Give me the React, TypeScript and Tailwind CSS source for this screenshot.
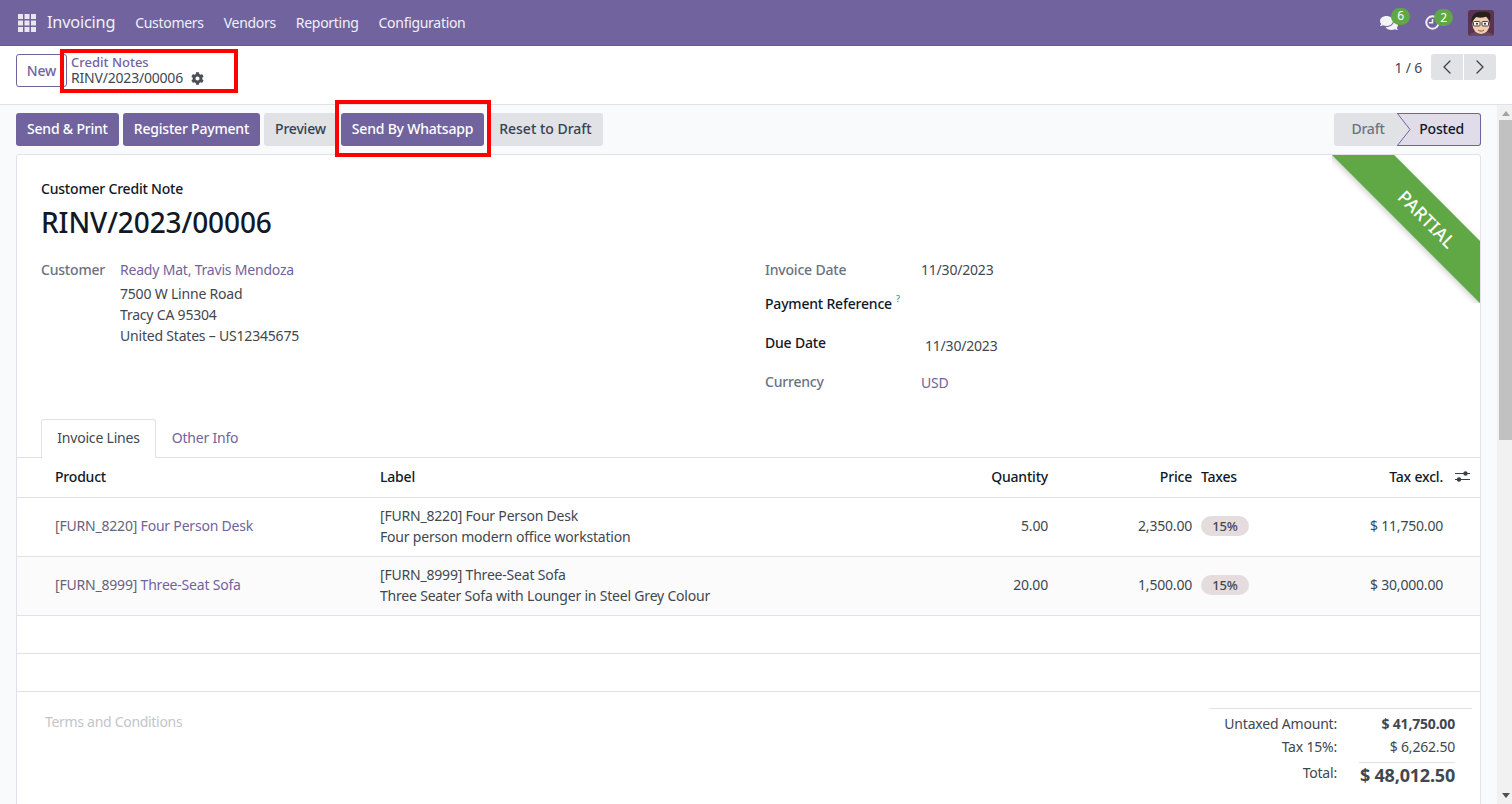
import { FaCog, FaComments } from 'react-icons/fa'
import { ChevronLeft, ChevronRight } from 'lucide-react'

const FONT = '[font-family:"Noto_Sans","Open_Sans",sans-serif]'

const LINES = [
  {
    code: '[FURN_8220]',
    name: 'Four Person Desk',
    label: '[FURN_8220] Four Person Desk',
    desc: 'Four person modern office workstation',
    qty: '5.00',
    price: '2,350.00',
    total: '$ 11,750.00',
    rowBg: 'bg-white',
  },
  {
    code: '[FURN_8999]',
    name: 'Three-Seat Sofa',
    label: '[FURN_8999] Three-Seat Sofa',
    desc: 'Three Seater Sofa with Lounger in Steel Grey Colour',
    qty: '20.00',
    price: '1,500.00',
    total: '$ 30,000.00',
    rowBg: 'bg-[#fbfbfb]',
  },
]

function AppsIcon() {
  return (
    <svg width="18" height="18" viewBox="0 0 18 18" fill="#e8e6f0">
      {[0, 6.5, 13].map((y) =>
        [0, 6.5, 13].map((x) => <rect key={`${x}-${y}`} x={x} y={y} width="5" height="5" />),
      )}
    </svg>
  )
}

function ClockIcon() {
  return (
    <svg width="15" height="15" viewBox="0 0 15 15" fill="none" stroke="#f0eff5">
      <circle cx="7.5" cy="7.5" r="6.2" strokeWidth="2" />
      <path d="M7.5 4v3.8H4" strokeWidth="1.5" />
    </svg>
  )
}

function Avatar() {
  return (
    <svg width="26" height="26" viewBox="0 0 26 26" className="rounded-[3px]">
      <rect width="26" height="26" fill="#5b3350" />
      <path d="M1 26c1-3 5-4 7-4h10c2 0 6 1 7 4z" fill="#6b4a60" />
      <ellipse cx="13" cy="14.500" rx="8.500" ry="9.500" fill="#f3cdb0" />
      <path d="M3.500 12C3 5 8 1 14 2c4-1 8 0 8.500 3l-.5 7c-1-3-2-5-4-5.500-3 1.500-7 1.500-9.500.500-1.500 1-3 2.500-5 5.500z" fill="#26211f" />
      <rect x="5.500" y="11.500" width="6.500" height="4.500" rx="1" fill="#f7f3ee" stroke="#333" strokeWidth="0.9" />
      <rect x="14" y="11.500" width="6.500" height="4.500" rx="1" fill="#f7f3ee" stroke="#333" strokeWidth="0.9" />
      <circle cx="9" cy="13.800" r="1" fill="#222" />
      <circle cx="17" cy="13.800" r="1" fill="#222" />
      <path d="M10 20c2 1.500 4 1.500 6 0" stroke="#9c4a3c" strokeWidth="1" fill="none" />
    </svg>
  )
}

function SlidersIcon() {
  return (
    <svg width="15" height="13" viewBox="0 0 15 13" fill="#3a3f46">
      <rect x="0" y="3" width="15" height="1" />
      <rect x="0" y="9" width="15" height="1" />
      <circle cx="10.500" cy="3.500" r="2.200" />
      <circle cx="4" cy="9.500" r="2.200" />
    </svg>
  )
}

function Badge({ n, left }: { n: number; left: string }) {
  return (
    <span className={`absolute -top-[6px] flex h-[17px] w-[19px] items-center justify-center rounded-full bg-[#5fa845] text-[12px] text-white ${left}`}>
      {n}
    </span>
  )
}

function PurpleButton({ children }: { children: string }) {
  return (
    <button className="h-[33px] rounded-[3px] bg-[#71639e] px-[11px] pb-[2px] text-[14px] font-medium text-white">
      {children}
    </button>
  )
}

function GrayButton({ children, extra }: { children: string; extra?: string }) {
  return (
    <button className={`h-[33px] rounded-[3px] bg-[#e0e2e6] px-[11px] pb-[2px] text-[14px] font-medium text-[#374151] ${extra ?? ''}`}>
      {children}
    </button>
  )
}

export default function App() {
  return (
    <div className={`relative flex h-[804px] w-[1512px] flex-col overflow-hidden bg-white text-[14px] tracking-[-0.2px] text-[#414750] ${FONT}`}>
      <header className="flex h-[46px] shrink-0 items-center border-b border-[#685b92] bg-[#71639e] pl-[18px] pr-[18px] text-[#f2f0f7]">
        <AppsIcon />
        <span className="ml-[11px] text-[16.300px]">Invoicing</span>
        <nav className="ml-[20px] flex gap-[20px] tracking-[-0.3px]">
          <span>Customers</span>
          <span>Vendors</span>
          <span>Reporting</span>
          <span>Configuration</span>
        </nav>
        <div className="ml-auto flex items-center">
          <span className="relative mr-[27px] flex">
            <FaComments className="h-[18px] w-[18px] text-[#f4f3f8]" />
            <Badge n={6} left="left-[11px]" />
          </span>
          <span className="relative mr-[28px] flex">
            <ClockIcon />
            <Badge n={2} left="left-[9px]" />
          </span>
          <Avatar />
        </div>
      </header>

      <div className="flex h-[59px] shrink-0 items-start border-b border-[#dfe2e7] bg-white pl-[16px] pr-[16px] pt-[8px]">
        <button className="h-[33px] w-[51px] rounded-[3px] border border-[#71639e] text-[14px] font-medium text-[#71639e]">
          New
        </button>
        <div className="ml-[4px] flex flex-col leading-[16px]">
          <span className="text-[13px] font-medium tracking-normal text-[#71639e]">Credit Notes</span>
          <span className="flex items-center gap-[8px] text-[14px]">
            RINV/2023/00006
            <FaCog className="h-[13px] w-[13px] text-[#4b5058]" />
          </span>
        </div>
        <div className="ml-auto flex items-center">
          <span className="mr-[9px]">1 / 6</span>
          <button className="flex h-[26px] w-[32px] items-center justify-center rounded-l-[3px] bg-[#e0e2e6]">
            <ChevronLeft className="h-[24px] w-[24px] text-[#374151]" strokeWidth={1.3} />
          </button>
          <button className="ml-[1px] flex h-[26px] w-[32px] items-center justify-center rounded-r-[3px] bg-[#e0e2e6]">
            <ChevronRight className="h-[24px] w-[24px] text-[#374151]" strokeWidth={1.3} />
          </button>
        </div>
      </div>

      <div className="flex min-h-0 flex-1">
        <main className="min-w-0 flex-1 bg-[#f9fafb] pl-[16px] pr-[16px] pt-[8px]">
          <div className="flex h-[33px] items-center gap-[4px]">
            <PurpleButton>Send & Print</PurpleButton>
            <PurpleButton>Register Payment</PurpleButton>
            <GrayButton>Preview</GrayButton>
            <PurpleButton>Send By Whatsapp</PurpleButton>
            <GrayButton extra="tracking-normal">Reset to Draft</GrayButton>
            <div className="relative ml-auto flex h-[33px] w-[147px] rounded-[3px]">
              <span className="flex w-[63px] items-center justify-center rounded-l-[3px] bg-[#e0e2e6] pb-[2px] pl-[5px] font-medium text-[#6b7280]">
                Draft
              </span>
              <span className="flex flex-1 items-center justify-end rounded-r-[3px] border-y border-r border-[#71639e] bg-[#e0dcea] pb-[2px] pr-[16px] font-medium text-[#111827]">
                Posted
              </span>
              <svg width="14" height="33" viewBox="0 0 14 33" className="absolute left-[63px] top-0">
                <path d="M0 0L13 16.500L0 33z" fill="#e0e2e6" />
                <path d="M0 0L13 16.500L0 33" fill="none" stroke="#71639e" />
              </svg>
            </div>
          </div>

          <section className="relative mt-[8px] h-[700px] rounded-[3px] border border-[#dfe2e7] bg-white">
            <div className="absolute right-0 top-0 h-[148px] w-[148px] overflow-hidden">
              <div className="absolute -right-[72px] top-[42px] flex h-[44px] w-[250px] rotate-45 items-center justify-center bg-[#5fa845] text-[18px] font-medium tracking-[0.2px] text-white shadow-[0_2px_6px_rgba(0,0,0,0.2)]">
                PARTIAL
              </div>
            </div>

            <div className="px-[24px] pt-[25px]">
              <div className="text-[14px] font-medium leading-[18px] text-[#111827]">Customer Credit Note</div>
              <h1 className="mt-[6px] text-[28px] font-medium leading-[36px] tracking-[-0.1px] text-[#111827]">RINV/2023/00006</h1>

              <div className="mt-[19px] flex h-[160px]">
                <div className="flex w-[724px]">
                  <span className="w-[79px] font-medium leading-[21px] text-[#6b7280]">Customer</span>
                  <div className="flex flex-col leading-[21px]">
                    <span className="mb-[3px] text-[#71639e]">Ready Mat, Travis Mendoza</span>
                    <span>7500 W Linne Road</span>
                    <span>Tracy CA 95304</span>
                    <span>United States – US12345675</span>
                  </div>
                </div>
                <div className="flex flex-col">
                  <div className="flex h-[21px] items-center">
                    <span className="w-[156px] font-medium text-[#6b7280]">Invoice Date</span>
                    <span>11/30/2023</span>
                  </div>
                  <div className="mt-[13px] flex h-[21px] items-center font-medium text-[#111827]">
                    Payment Reference
                    <sup className="ml-[4px] text-[9px] text-[#3b8fb5]">?</sup>
                  </div>
                  <div className="mt-[18px] flex h-[24px] items-start">
                    <span className="w-[160px] font-medium text-[#111827]">Due Date</span>
                    <span className="pt-[3px]">11/30/2023</span>
                  </div>
                  <div className="mt-[15px] flex h-[21px] items-center">
                    <span className="w-[156px] font-medium text-[#6b7280]">Currency</span>
                    <span className="pt-[1px] text-[#71639e]">USD</span>
                  </div>
                </div>
              </div>
            </div>

            <div className="flex h-[39px] items-end border-b border-[#dfe2e7] pl-[24px]">
              <span className="-mb-px flex h-[39px] w-[115px] items-center justify-center rounded-t-[3px] border border-b-0 border-[#dfe2e7] bg-white pb-[3px]">
                Invoice Lines
              </span>
              <span className="-mb-px flex h-[39px] w-[98px] items-center justify-center pb-[3px] text-[#71639e]">Other Info</span>
            </div>

            <div className="grid h-[40px] grid-cols-[325px_540px_128px_144px_109px_142px_1fr] items-center border-b border-[#dfe2e7] pb-[2px] pl-[38px] font-medium text-[#111827]">
              <span>Product</span>
              <span>Label</span>
              <span className="text-right">Quantity</span>
              <span className="text-right">Price</span>
              <span className="pl-[9px]">Taxes</span>
              <span className="text-right">Tax excl.</span>
              <span className="flex justify-center pl-[2px]">
                <SlidersIcon />
              </span>
            </div>

            {LINES.map((line) => (
              <div
                key={line.code}
                className={`grid h-[59px] grid-cols-[325px_540px_128px_144px_109px_142px_1fr] items-center border-b border-[#dfe2e7] pb-[3px] pl-[38px] ${line.rowBg}`}
              >
                <span className="text-[#66637c]">
                  {line.code} <span className="text-[#71639e]">{line.name}</span>
                </span>
                <span className="flex flex-col leading-[21px]">
                  <span>{line.label}</span>
                  <span>{line.desc}</span>
                </span>
                <span className="text-right">{line.qty}</span>
                <span className="text-right">{line.price}</span>
                <span className="pl-[9px]">
                  <span className="inline-flex h-[20px] w-[48px] items-center justify-center rounded-full bg-[#e5dddd] text-[13px] font-medium">
                    15%
                  </span>
                </span>
                <span className="text-right">{line.total}</span>
              </div>
            ))}
            <div className="h-[38px] border-b border-[#dfe2e7]" />
            <div className="h-[38px] border-b border-[#dfe2e7]" />

            <div className="flex justify-between pl-[28px] pr-[8px] pt-[16px]">
              <span className="pt-[3px] tracking-[-0.3px] text-[#c2c5ca]">Terms and Conditions</span>
              <div className="w-[263px] border-t border-[#dfe2e7] pr-[17px] pt-[4px]">
                <div className="grid grid-cols-[128px_96px] gap-x-[22px] text-right leading-[21px]">
                  <span>Untaxed Amount:</span>
                  <span className="font-bold">$ 41,750.00</span>
                  <span className="mt-[2px]">Tax 15%:</span>
                  <span className="mt-[2px]">$ 6,262.50</span>
                  <span className="mt-[5px]">Total:</span>
                  <span className="mt-[5px] whitespace-nowrap border-t border-[#dfe2e7] text-[18px] font-bold leading-[24px]">$ 48,012.50</span>
                </div>
              </div>
            </div>
          </section>
        </main>

        <aside className="flex w-[15px] shrink-0 flex-col items-center bg-[#f1f1f1]">
          <span className="ml-[2px] mt-[6px] h-0 w-0 border-x-[4px] border-b-[5px] border-x-transparent border-b-[#a3a3a3]" />
          <span className="ml-[2px] mt-[4px] h-[320px] w-[13px] bg-[#c1c1c1]" />
          <span className="mb-[6px] ml-[2px] mt-auto h-0 w-0 border-x-[4px] border-t-[5px] border-x-transparent border-t-[#505050]" />
        </aside>
      </div>

      {/* red annotation boxes from the screenshot */}
      <div className="absolute left-[60px] top-[49px] h-[44px] w-[178px] border-[4px] border-[#ff0000]" />
      <div className="absolute left-[335px] top-[100px] h-[57px] w-[156px] border-[4px] border-[#ff0000]" />
    </div>
  )
}
